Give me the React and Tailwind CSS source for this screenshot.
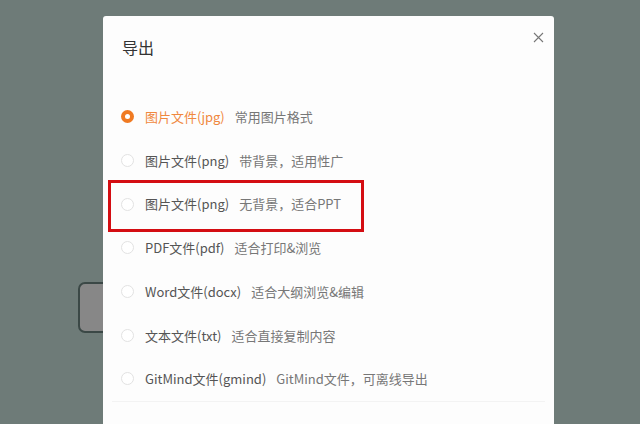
// App.jsx
// Export dialog over a dimmed canvas

const options = [
    { id: 'jpg', label: '图片文件(jpg)', desc: '常用图片格式' },
    { id: 'png-bg', label: '图片文件(png)', desc: '带背景，适用性广' },
    { id: 'png', label: '图片文件(png)', desc: '无背景，适合PPT' },
    { id: 'pdf', label: 'PDF文件(pdf)', desc: '适合打印&浏览' },
    { id: 'docx', label: 'Word文件(docx)', desc: '适合大纲浏览&编辑' },
    { id: 'txt', label: '文本文件(txt)', desc: '适合直接复制内容' },
    { id: 'gmind', label: 'GitMind文件(gmind)', desc: 'GitMind文件，可离线导出' },
];

function Radio({ checked }) {
    if (checked) {
        return (
            <span className="flex h-[13px] w-[13px] shrink-0 items-center justify-center rounded-full bg-[#f07a22]">
                <span className="h-[5px] w-[5px] rounded-full bg-white" />
            </span>
        );
    }
    return <span className="h-[13px] w-[13px] shrink-0 rounded-full border border-[#e2e2e2] bg-white" />;
}

export default function App() {
    const selected = 'jpg';

    return (
        <div
            className="relative h-[424px] w-[640px] overflow-hidden bg-[#6e7b78]"
            style={{ fontFamily: '"Noto Sans CJK SC", "Noto Sans", sans-serif' }}
        >
            {/* button behind the overlay */}
            <div className="absolute left-[78px] top-[282px] h-[51px] w-[60px] rounded-[7px] border-2 border-[#3b4846] bg-[#878787]" />

            {/* dialog */}
            <div className="absolute left-[103px] top-[16px] h-[420px] w-[451px] rounded-t-[3px] bg-[#fdfdfd]">
                <div className="flex items-start justify-between pl-[19px] pr-[6px] pt-[19px]">
                    <h2 className="text-[16px] leading-[24px] text-[#333]">导出</h2>
                    <button className="mt-[-7px] p-1 text-[#777]">
                        <svg width="11" height="11" viewBox="0 0 11 11" fill="none" stroke="currentColor" strokeWidth="1.1">
                            <path d="M1 1L10 10M10 1L1 10" />
                        </svg>
                    </button>
                </div>

                <ul className="mt-[36px] flex flex-col pl-[18px]">
                    {options.map(o => (
                        <li key={o.id} className="flex h-[43.7px] items-center gap-[11px]">
                            <Radio checked={o.id === selected} />
                            <span className={`text-[13px] ${o.id === selected ? 'text-[#f0883e]' : 'text-[#555]'}`}>{o.label}</span>
                            <span className="-ml-[1px] text-[13px] text-[#777]">{o.desc}</span>
                        </li>
                    ))}
                </ul>

                <div className="mx-[9px] border-t border-[#f3f3f3]" />

                {/* red highlight annotation */}
                <div className="absolute left-[5px] top-[164px] h-[52px] w-[256px] border-[3px] border-[#d40d12]" />
            </div>
        </div>
    );
}
